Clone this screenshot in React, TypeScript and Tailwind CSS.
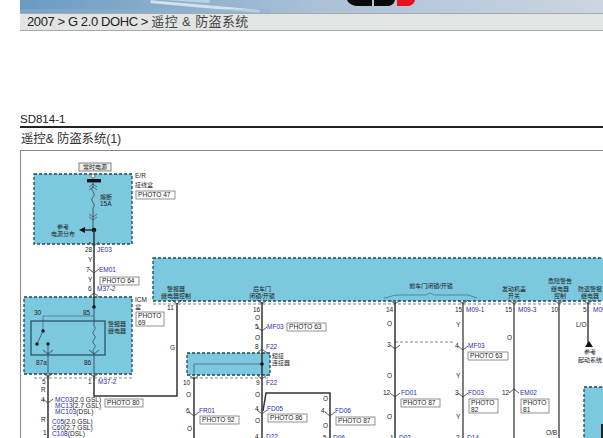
const BOX = '#7cc8de'
const BLUE = '#2b2bb0'
const INK = '#222'

function T({ x, y, c = INK, s = 6.5, w, a, children }: { x: number; y: number; c?: string; s?: number; w?: number; a?: 'middle'; children: string }) {
  return (
    <text x={x} y={y + 2.3} fill={c} fontSize={s} fontWeight={w} textAnchor={a}>
      {children}
    </text>
  )
}

// connector chevron, drawn as a V on the wire
function V({ x, y, up }: { x: number; y: number; up?: boolean }) {
  const d = up ? -4 : 4
  return <path d={`M${x - 5} ${y - d / 2}L${x} ${y + d / 2}L${x + 5} ${y - d / 2}`} fill="none" stroke="#444" strokeWidth="0.9" />
}

function Photo({ x, y, w, h = 8, lines }: { x: number; y: number; w: number; h?: number; lines: string[] }) {
  return (
    <g>
      <rect x={x} y={y} width={w} height={h} fill="#fff" stroke="#777" strokeWidth="0.8" />
      {lines.map((l, i) => (
        <T key={l} x={x + 2} y={y + 4 + i * 7} s={6.6}>
          {l}
        </T>
      ))}
    </g>
  )
}

function Box({ x, y, w, h }: { x: number; y: number; w: number; h: number }) {
  return <rect x={x} y={y} width={w} height={h} fill={BOX} stroke="#1d4a5a" strokeWidth="1.3" strokeDasharray="3 2" />
}

function Wire({ d, c = '#333', w = 1.5 }: { d: string; c?: string; w?: number }) {
  return <path d={d} fill="none" stroke={c} strokeWidth={w} />
}

function Diagram() {
  return (
    <svg width="583" height="289" className="block" style={{ fontFamily: '"Liberation Sans", "Noto Sans CJK SC", sans-serif' }}>
      <g transform="translate(-21 -150)">
        {/* blue modules */}
        <Box x={34} y={173} w={98} h={70} />
        <Box x={24} y={296} w={108} h={77} />
        <Box x={153} y={257} w={470} h={43} />
        <Box x={187} y={352} w={83} h={22} />
        <Box x={584} y={386} w={40} h={70} />
        <rect x={601} y={423} width={2} height={16} fill="#222" />

        {/* dashed module edges below the boxes */}
        <path d="M34 377H132M153 303H603M190 377H270M395 341H455" fill="none" stroke="#555" strokeWidth="0.7" strokeDasharray="3 2" />

        {/* fuse + battery feed */}
        <rect x={79} y={162} width={32} height={8} fill="#eee" stroke="#666" strokeWidth="0.8" />
        <T x={95} y={166} s={6} a="middle">常时电源</T>
        <circle cx={93} cy={175} r={2} fill="#fff" stroke="#333" strokeWidth="0.6" />
        <rect x={87} y={178} width={14} height={3.4} fill="#111" />
        <Wire d="M93 181V186C89 189 97 192 93 196C89 200 97 203 93 207V229" w={0.9} c="#445" />
        <path d="M89 186L93 183L97 186M89 189L93 186L97 189M89 213L93 216L97 213M89 216L93 219L97 216" fill="none" stroke="#445" strokeWidth="0.7" />
        <Wire d="M93 229H84" />
        <path d="M85 226V232L79 229Z" fill="#111" />
        <circle cx={94} cy={229} r={2.3} fill="#111" />
        <T x={100} y={196} s={6}>熔断</T>
        <T x={100} y={203}>15A</T>
        <T x={63} y={226} s={6} a="middle">参考</T>
        <T x={63} y={233} s={6} a="middle">电源分布</T>
        <T x={135} y={175}>E/R</T>
        <T x={135} y={184} s={6}>接线盒</T>
        <Photo x={136} y={190} w={39} lines={['PHOTO 47']} />

        <Wire d="M94 229V306" />
        <V x={94} y={243} />
        <V x={94} y={270} />
        <V x={94} y={294} up />
        <T x={85} y={249}>28</T>
        <T x={97} y={249} c={BLUE}>JE03</T>
        <T x={88} y={259}>Y</T>
        <T x={86} y={269}>7</T>
        <T x={99} y={269} c={BLUE}>EM01</T>
        <T x={88} y={279}>Y</T>
        <Photo x={100} y={276} w={39} lines={['PHOTO 64']} />
        <T x={88} y={288}>6</T>
        <T x={97} y={288} c={BLUE}>M37-2</T>

        {/* ICM relay */}
        <T x={135} y={299}>ICM</T>
        <T x={135} y={306} s={6}>盒</T>
        <Photo x={136} y={311} w={28} h={14} lines={['PHOTO', '69']} />
        <circle cx={94} cy={306} r={1.8} fill="#111" />
        <Wire d="M94 306V325M94 352V374" w={0.9} c="#345" />
        <path d="M94 315H43V330" fill="none" stroke="#456" strokeWidth="0.6" />
        <path d="M94 325C98 328 90 331 94 334C98 337 90 340 94 343C98 346 90 349 94 352" fill="none" stroke="#345" strokeWidth="0.8" />
        <rect x={31} y={320} width={74} height={34} fill="none" stroke="#2c5566" strokeWidth="1.3" />
        <T x={34} y={312}>30</T>
        <T x={83} y={312}>85</T>
        <T x={108} y={323} s={6}>警报器</T>
        <T x={108} y={330} s={6}>继电器</T>
        <circle cx={43} cy={330} r={1.7} fill="#111" />
        <circle cx={37} cy={343} r={1.7} fill="#111" />
        <circle cx={48} cy={343} r={1.7} fill="#111" />
        <Wire d="M43 330L37 343M48 343V374" w={0.8} c="#345" />
        <V x={48} y={351} />
        <V x={94} y={351} />
        <T x={36} y={362}>87a</T>
        <T x={84} y={362}>86</T>
        <V x={48} y={374} />
        <V x={94} y={374} />
        <Wire d="M48 374V438" />
        <Wire d="M94 374V395H177V302" />
        <V x={48} y={400} />
        <T x={42} y={381}>5</T>
        <T x={41} y={389}>R</T>
        <T x={41} y={399}>4</T>
        <T x={41} y={419}>R</T>
        <T x={43} y={432}>1</T>
        <T x={88} y={381}>1</T>
        <T x={98} y={381} c={BLUE}>M37-2</T>
        <text x={55} y={401.3} fontSize={6.6} fill={INK}><tspan fill={BLUE}>MC03</tspan>(2.0 GSL)</text>
        <text x={55} y={407.3} fontSize={6.6} fill={INK}><tspan fill={BLUE}>MC13</tspan>(2.7 GSL)</text>
        <text x={55} y={413.3} fontSize={6.6} fill={INK}><tspan fill={BLUE}>MC103</tspan>(DSL)</text>
        <text x={52} y={423.3} fontSize={6.6} fill={INK}><tspan fill={BLUE}>C05</tspan>(2.0 GSL)</text>
        <text x={52} y={429.3} fontSize={6.6} fill={INK}><tspan fill={BLUE}>C60</tspan>(2.7 GSL)</text>
        <text x={52} y={435.3} fontSize={6.6} fill={INK}><tspan fill={BLUE}>C108</tspan>(DSL)</text>
        <Photo x={105} y={398} w={38} lines={['PHOTO 80']} />

        {/* module labels */}
        <T x={176} y={288} s={6} a="middle">警报器</T>
        <T x={176} y={295} s={6} a="middle">继电器控制</T>
        <T x={262} y={288} s={6} a="middle">后车门</T>
        <T x={262} y={295} s={6} a="middle">闭锁/开锁</T>
        <T x={431} y={285} s={6} a="middle">前车门闭锁/开锁</T>
        <path d="M384 297C388 297 392 294 398 294H426L430 292L434 294H468L477 297" fill="none" stroke="#246" strokeWidth="0.5" />
        <T x={514} y={288} s={6} a="middle">发动机盖</T>
        <T x={514} y={295} s={6} a="middle">开关</T>
        <T x={560} y={280} s={6} a="middle">危险警告</T>
        <T x={560} y={288} s={6} a="middle">继电器</T>
        <T x={560} y={295} s={6} a="middle">控制</T>
        <T x={590} y={288} s={6} a="middle">防盗警报</T>
        <T x={590} y={295} s={6} a="middle">继电器</T>

        <V x={177} y={301} />
        <T x={167} y={307}>11</T>
        <T x={170} y={347}>G</T>

        {/* rear door column */}
        <V x={262} y={301} />
        <Wire d="M262 301V439" />
        <T x={253} y={309}>16</T>
        <T x={255} y={317}>O</T>
        <T x={255} y={326}>5</T>
        <V x={262} y={328} />
        <T x={267} y={326} c={BLUE}>MF03</T>
        <Photo x={287} y={322} w={39} lines={['PHOTO 63']} />
        <T x={255} y={337}>O</T>
        <T x={255} y={346}>8</T>
        <T x={266} y={346} c={BLUE}>F22</T>
        <V x={262} y={350} up />
        <T x={272} y={355} s={6}>短接</T>
        <T x={272} y={362} s={6}>连接器</T>
        <path d="M262 363H194V376" fill="none" stroke="#345" strokeWidth="0.6" />
        <circle cx={262} cy={363} r={1.8} fill="#111" />
        <V x={262} y={376} />
        <V x={194} y={376} />
        <Wire d="M194 376V439" />
        <T x={183} y={382}>10</T>
        <T x={186} y={394}>O</T>
        <T x={186} y={410}>6</T>
        <V x={194} y={413} />
        <T x={199} y={410} c={BLUE}>FR01</T>
        <Photo x={200} y={415} w={39} lines={['PHOTO 92']} />
        <T x={187} y={428}>O</T>
        <T x={256} y={382}>9</T>
        <T x={266} y={382} c={BLUE}>F22</T>
        <T x={255} y={394}>O</T>
        <T x={255} y={408}>4</T>
        <T x={267} y={408} c={BLUE}>FD05</T>
        <V x={262} y={411} />
        <Photo x={268} y={413} w={39} lines={['PHOTO 86']} />
        <T x={255} y={420}>O</T>
        <T x={255} y={436}>4</T>
        <T x={266} y={436} c={BLUE}>D22</T>

        <Wire d="M263 410L266 392H330V439" />
        <T x={323} y={398}>O</T>
        <T x={321} y={410}>4</T>
        <V x={330} y={413} />
        <T x={335} y={410} c={BLUE}>FD06</T>
        <Photo x={336} y={416} w={39} lines={['PHOTO 87']} />
        <T x={323} y={425}>O</T>
        <T x={323} y={437}>5</T>
        <T x={333} y={437} c={BLUE}>D06</T>

        {/* front door columns */}
        <V x={395} y={301} />
        <Wire d="M395 301V439" />
        <T x={386} y={309}>14</T>
        <T x={387} y={323}>O</T>
        <T x={387} y={344}>3</T>
        <V x={395} y={346} />
        <T x={387} y={375}>O</T>
        <T x={383} y={392}>12</T>
        <V x={395} y={394} />
        <T x={401} y={392} c={BLUE}>FD01</T>
        <Photo x={401} y={398} w={39} lines={['PHOTO 87']} />
        <T x={387} y={416}>O</T>
        <T x={390} y={437}>1</T>
        <T x={399} y={437} c={BLUE}>D02</T>

        <V x={463} y={301} />
        <Wire d="M463 301V439" c="#555" />
        <T x={455} y={309}>15</T>
        <T x={466} y={309} c={BLUE}>M09-1</T>
        <T x={456} y={324}>Y</T>
        <T x={455} y={345}>4</T>
        <V x={463} y={347} />
        <T x={468} y={345} c={BLUE}>MF03</T>
        <Photo x={468} y={351} w={40} lines={['PHOTO 63']} />
        <T x={456} y={375}>Y</T>
        <T x={455} y={392}>3</T>
        <V x={463} y={394} />
        <T x={468} y={392} c={BLUE}>FD03</T>
        <Photo x={469} y={398} w={29} h={14} lines={['PHOTO', '82']} />
        <T x={456} y={416}>Y</T>
        <T x={456} y={437}>2</T>
        <T x={467} y={437} c={BLUE}>D14</T>

        <V x={514} y={301} />
        <Wire d="M514 301V439" c="#555" />
        <T x={505} y={309}>15</T>
        <T x={518} y={309} c={BLUE}>M09-3</T>
        <T x={507} y={337}>O</T>
        <T x={502} y={392}>12</T>
        <V x={514} y={390} up />
        <T x={520} y={392} c={BLUE}>EM02</T>
        <Photo x={521} y={398} w={28} h={14} lines={['PHOTO', '81']} />

        <V x={559} y={301} />
        <Wire d="M559 301V439" c="#555" />
        <T x={551} y={309}>10</T>
        <T x={546} y={432}>O/B</T>

        <V x={588} y={301} />
        <Wire d="M588 301V345" c="#444" />
        <T x={583} y={309}>5</T>
        <T x={593} y={309} c={BLUE}>M09-2</T>
        <T x={576} y={324}>L/O</T>
        <path d="M585 346L589 340L593 346Z" fill="#111" />
        <T x={590} y={351} s={6} a="middle">参考</T>
        <T x={590} y={359} s={6} a="middle">起动系统</T>
      </g>
    </svg>
  )
}

export default function App() {
  return (
    <div className="flex h-[438px] w-[603px] flex-col overflow-hidden bg-white font-['Liberation_Sans','Noto_Sans_CJK_SC',sans-serif] text-[#222]">
      <div className="relative ml-5 h-[13px] shrink-0 overflow-hidden bg-gradient-to-r from-[#6a9ac2] via-[#a9c0d6] to-[#ccd6e0]">
        <div className="absolute -top-1 left-[70px] h-[3px] w-[120px] rotate-[4deg] rounded-full bg-[#cfe0ec] opacity-70" />
        <div className="absolute left-[130px] top-[5px] h-[3px] w-[110px] rotate-[5deg] rounded-full bg-[#e4edf3] opacity-80" />
        <div className="absolute left-0 top-[9px] h-1 w-[250px] bg-[#8fb4d2] opacity-40" />
        <svg width="70" height="13" className="absolute left-[327px] top-0">
          <path d="M0 0C2 4 6 6 12 6H25V0ZM27 0V6H40C44 6 47 4 48 0Z" fill="#0a0a0a" />
          <path d="M50 0V6H60C64 6 67 4 68 0Z" fill="#e8141c" />
        </svg>
      </div>
      <div className="ml-5 flex h-[18px] shrink-0 items-center border-y border-[#a8aaaa] bg-[#e3e5e5] pl-[7px] text-[13px] tracking-[-0.4px]">
        <span className="whitespace-pre">2007 &gt; G 2.0 DOHC &gt; </span>
        <span className="whitespace-pre tracking-[0.4px] text-[#444]">遥控 &amp; 防盗系统</span>
      </div>
      <div className="ml-5 mt-[82px] shrink-0 border-b-2 border-[#222] text-[11.5px] leading-[13px]">SD814-1</div>
      <div className="ml-[21px] shrink-0 pb-[3px] pt-1 text-[12.5px] leading-[15px] tracking-[-0.2px] text-[#333]">遥控&amp; 防盗系统(1)</div>
      <div className="ml-5 flex-1 overflow-hidden border-l border-t border-[#888]">
        <Diagram />
      </div>
    </div>
  )
}
